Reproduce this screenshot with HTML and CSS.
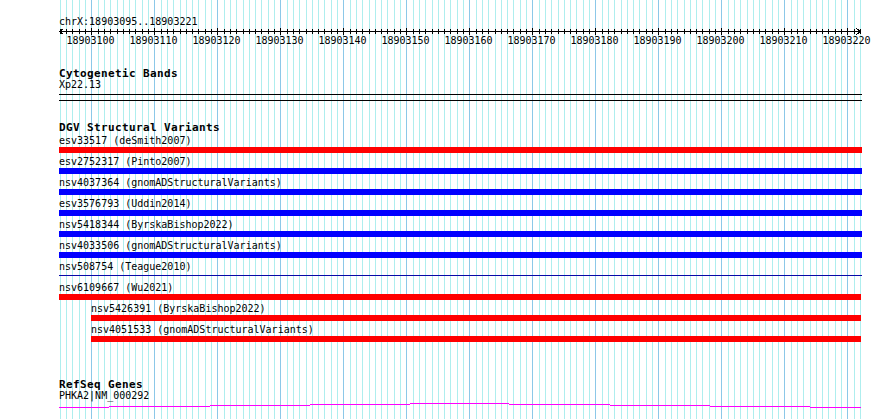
FILE: index.html
```html
<!DOCTYPE html>
<html lang="en">
<head>
    <meta charset="UTF-8">
    <title>chrX:18903095..18903221</title>
    <link rel="stylesheet" href="styles.css">
</head>
<body>

    <div class="view">

        <!-- ruler -->
        <div class="loc">chrX:18903095..18903221</div>
        <svg class="ruler" width="803" height="7" viewBox="0 0 803 7">
            <defs>
                <pattern id="ticks" x="32" y="0" width="63" height="7" patternUnits="userSpaceOnUse">
                    <rect x="0" y="0" width="1" height="7"/>
                    <rect x="7" y="1" width="1" height="5"/>
                    <rect x="13" y="1" width="1" height="5"/>
                    <rect x="19" y="1" width="1" height="5"/>
                    <rect x="26" y="1" width="1" height="5"/>
                    <rect x="32" y="1" width="1" height="5"/>
                    <rect x="38" y="1" width="1" height="5"/>
                    <rect x="44" y="1" width="1" height="5"/>
                    <rect x="51" y="1" width="1" height="5"/>
                    <rect x="57" y="1" width="1" height="5"/>
                </pattern>
            </defs>
            <rect x="1" y="0" width="801" height="7" fill="url(#ticks)"/>
            <rect x="0" y="3" width="802" height="1"/>
            <path d="M4.5 0.5 L0.5 3.5 L4.5 6.5" class="arrow"/>
            <path d="M797.5 0.5 L801.5 3.5 L797.5 6.5" class="arrow"/>
        </svg>
        <div class="ruler-labels">
            <span>18903100</span><span>18903110</span><span>18903120</span><span>18903130</span>
            <span>18903140</span><span>18903150</span><span>18903160</span><span>18903170</span>
            <span>18903180</span><span>18903190</span><span>18903200</span><span>18903210</span>
            <span>18903220</span>
        </div>

        <!-- Cytogenetic Bands -->
        <div class="track cyto">
            <div class="track-title">Cytogenetic Bands</div>
            <div class="label">Xp22.13</div>
            <div class="band"></div>
        </div>

        <!-- DGV Structural Variants -->
        <div class="track dgv">
            <div class="track-title">DGV Structural Variants</div>
            <div class="feature">
                <div class="label">esv33517 (deSmith2007)</div>
                <div class="bar loss"></div>
            </div>
            <div class="feature">
                <div class="label">esv2752317 (Pinto2007)</div>
                <div class="bar gain"></div>
            </div>
            <div class="feature">
                <div class="label">nsv4037364 (gnomADStructuralVariants)</div>
                <div class="bar gain"></div>
            </div>
            <div class="feature">
                <div class="label">esv3576793 (Uddin2014)</div>
                <div class="bar gain"></div>
            </div>
            <div class="feature">
                <div class="label">nsv5418344 (ByrskaBishop2022)</div>
                <div class="bar gain"></div>
            </div>
            <div class="feature">
                <div class="label">nsv4033506 (gnomADStructuralVariants)</div>
                <div class="bar gain"></div>
            </div>
            <div class="feature">
                <div class="label">nsv508754 (Teague2010)</div>
                <div class="bar thin"></div>
            </div>
            <div class="feature">
                <div class="label">nsv6109667 (Wu2021)</div>
                <div class="bar loss short"></div>
            </div>
            <div class="feature inset">
                <div class="label">nsv5426391 (ByrskaBishop2022)</div>
                <div class="bar loss short"></div>
            </div>
            <div class="feature inset">
                <div class="label">nsv4051533 (gnomADStructuralVariants)</div>
                <div class="bar loss short"></div>
            </div>
        </div>

        <!-- RefSeq Genes -->
        <div class="track refseq">
            <div class="track-title">RefSeq Genes</div>
            <div class="label">PHKA2|NM_000292</div>
            <svg class="intron" width="803" height="8" viewBox="0 0 803 8">
                <rect x="0" y="6" width="50" height="1"/>
                <rect x="50" y="5" width="101" height="1"/>
                <rect x="151" y="4" width="100" height="1"/>
                <rect x="251" y="3" width="100" height="1"/>
                <rect x="351" y="2" width="99" height="1"/>
                <rect x="450" y="3" width="101" height="1"/>
                <rect x="551" y="4" width="100" height="1"/>
                <rect x="651" y="5" width="100" height="1"/>
                <rect x="751" y="6" width="51" height="1"/>
            </svg>
        </div>

    </div>

</body>
</html>
```

FILE: styles.css
```css
/* page */
body {
    margin: 0;
    padding: 0;
    background-color: #fff;
    color: #000;
    font-family: "DejaVu Sans Mono", "Liberation Mono", monospace;
    font-size: 10px;
    overflow: hidden;
}

/* drawing area, 6.3px per base, grid line on every base, darker every 10 */
.view {
    box-sizing: border-box;
    width: 803px;
    height: 419px;
    margin-left: 59px;
    padding-top: 16px;
    background-image:
        linear-gradient(90deg, #8cc8e8 1px, transparent 1px),
        linear-gradient(90deg, transparent 7px, #aeeeee 7px, #aeeeee 8px, transparent 8px),
        linear-gradient(90deg, transparent 13px, #aeeeee 13px, #aeeeee 14px, transparent 14px),
        linear-gradient(90deg, transparent 19px, #aeeeee 19px, #aeeeee 20px, transparent 20px),
        linear-gradient(90deg, transparent 26px, #aeeeee 26px, #aeeeee 27px, transparent 27px),
        linear-gradient(90deg, transparent 32px, #aeeeee 32px, #aeeeee 33px, transparent 33px),
        linear-gradient(90deg, transparent 38px, #aeeeee 38px, #aeeeee 39px, transparent 39px),
        linear-gradient(90deg, transparent 44px, #aeeeee 44px, #aeeeee 45px, transparent 45px),
        linear-gradient(90deg, transparent 51px, #aeeeee 51px, #aeeeee 52px, transparent 52px),
        linear-gradient(90deg, transparent 57px, #aeeeee 57px, #aeeeee 58px, transparent 58px);
    background-size: 63px 100%;
    background-position: 32px 0;
    background-repeat: repeat-x;
}

/* ruler */
.loc {
    line-height: 12px;
}

.ruler {
    display: block;
    fill: #000;
    shape-rendering: crispEdges;
}

.ruler .arrow {
    fill: none;
    stroke: #000;
    stroke-width: 1;
}

.ruler-labels {
    display: flex;
    line-height: 12px;
    white-space: nowrap;
}

.ruler-labels span {
    flex: 0 0 63px;
    text-align: center;
}

/* tracks */
.track-title {
    font-weight: bold;
    font-size: 11px;
    letter-spacing: 0.38px;
    line-height: 11px;
}

.label {
    line-height: 11px;
    white-space: nowrap;
}

.cyto {
    margin-top: 21px;
}

.band {
    height: 5px;
    margin-top: 4px;
    border-top: 1px solid #000;
    border-bottom: 1px solid #000;
}

.dgv {
    margin-top: 21px;
}

.feature {
    padding-top: 2px;
}

.feature.inset {
    padding-left: 32px;
}

.bar {
    height: 6px;
    margin: 1px 0;
}

.bar.loss {
    background-color: #ff0000;
}

.bar.gain {
    background-color: #0000ff;
}

.bar.thin {
    height: 1px;
    margin: 3px 0 4px;
    background-color: #0808a8;
}

.bar.short {
    margin-right: 1px;
}

.refseq {
    margin-top: 37px;
}

.intron {
    display: block;
    fill: #ff00ff;
    shape-rendering: crispEdges;
}
```
